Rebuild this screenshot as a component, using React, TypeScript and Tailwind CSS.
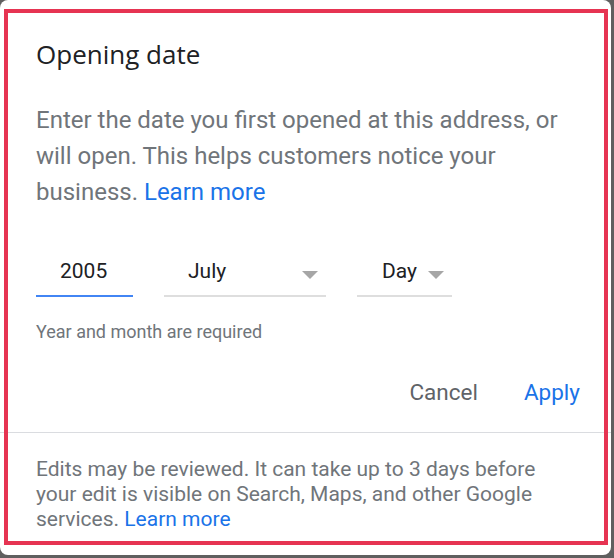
import React from "react";

const Arrow = () => (
  <svg width="16" height="8" viewBox="0 0 16 8" className="shrink-0">
    <path d="M0 0 L16 0 L8 8 Z" fill="#a6a6a6" />
  </svg>
);

const App = () => {
  return (
    <div className="w-[614px] h-[558px] bg-[#5f5f5f] overflow-hidden" style={{ fontFamily: "Roboto, 'Liberation Sans', sans-serif" }}>
      <div className="relative w-[611px] h-[555px] bg-white rounded-[8px]">
        <div className="pl-[36px] pt-[38px]">
          <h1 className="text-[26px] leading-[32px] text-[#202124]" style={{ fontFamily: "'Open Sans', Roboto, sans-serif" }}>
            Opening date
          </h1>
          <p className="mt-[32px] w-[545px] text-[24px] leading-[36px] text-[#70757a]">
            Enter the date you first opened at this address, or will open. This helps customers notice your business.{" "}
            <span className="text-[#1a73e8]">Learn more</span>
          </p>

          <div className="mt-[48px] flex gap-[31px] text-[21px] text-[#202124]">
            <div className="w-[97px] h-[39px] border-b-2 border-[#4285f4] pl-[24px] leading-[26px]">2005</div>
            <div className="w-[162px] h-[39px] border-b-2 border-[#dedede] pl-[24px] pr-[8px] flex items-start justify-between">
              <span className="leading-[26px]">July</span>
              <div className="mt-[13px]"><Arrow /></div>
            </div>
            <div className="w-[95px] h-[39px] border-b-2 border-[#dedede] pl-[25px] pr-[8px] flex items-start justify-between">
              <span className="leading-[26px]">Day</span>
              <div className="mt-[13px]"><Arrow /></div>
            </div>
          </div>

          <div className="mt-[24px] text-[18px] leading-[22px] text-[#70757a]">Year and month are required</div>
        </div>

        <div className="mt-[36px] flex justify-end gap-[46px] pr-[31px] text-[22.5px] leading-[26px]">
          <button className="text-[#5f6368]">Cancel</button>
          <button className="text-[#1a73e8]">Apply</button>
        </div>

        <div className="mt-[27px] h-px bg-[#dadce0]" />

        <p className="mt-[24px] pl-[36px] w-[566px] text-[21px] leading-[25px] text-[#70757a]">
          Edits may be reviewed. It can take up to 3 days before your edit is visible on Search, Maps, and other Google services.{" "}
          <span className="text-[#1a73e8]">Learn more</span>
        </p>

        <div className="absolute left-[4px] top-[9px] w-[604px] h-[536px] border-[4px] border-[#e63452] pointer-events-none" />
      </div>
    </div>
  );
};

export default App;
